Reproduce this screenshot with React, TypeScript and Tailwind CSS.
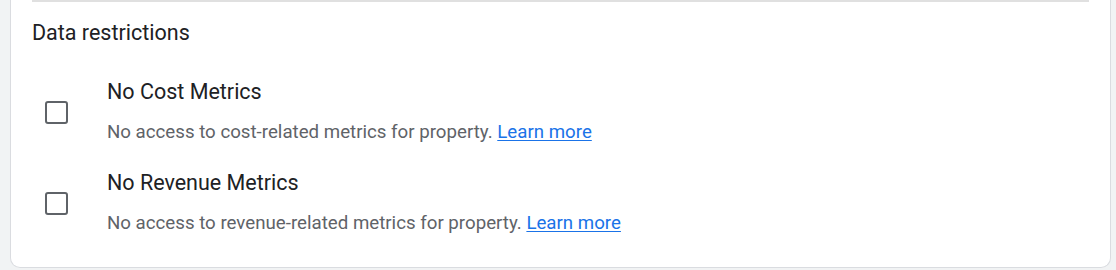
import React, { useState } from 'react';

interface RestrictionProps {
  title: string;
  description: string;
}

const Restriction = ({ title, description }: RestrictionProps) => {
  const [checked, setChecked] = useState(false);

  return (
    <div className="flex items-center">
      <div className="w-[75px] shrink-0 pl-[13px] pt-[1px]">
        <button
          type="button"
          onClick={() => setChecked(!checked)}
          className={`block h-[23px] w-[23px] rounded-[3px] border-[2.5px] ${
            checked ? 'border-[#1a73e8] bg-[#1a73e8]' : 'border-[#5f6368] bg-white'
          }`}
        />
      </div>
      <div className="flex flex-col gap-[12px]">
        <div className="text-[21.5px] leading-[28px] text-[#202124] [font-family:Roboto,'Liberation_Sans',sans-serif]">
          {title}
        </div>
        <div className="text-[18.7px] leading-[28px] text-[#5f6368] [font-family:Roboto,'Liberation_Sans',sans-serif]">
          {description}{' '}
          <a href="#" className="text-[#1a73e8] underline underline-offset-2">
            Learn more
          </a>
        </div>
      </div>
    </div>
  );
};

export default function App() {
  return (
    <div className="h-[270px] w-[1116px] bg-[#f1f3f4] pl-[10px] pr-[5px]">
      <div className="h-[268px] rounded-b-[10px] border-x border-b border-[#dadce0] bg-white px-[21px] pb-[31px]">
        <div className="h-[2px] bg-[#e0e0e0]" />
        <h2 className="mt-[17px] text-[21.5px] leading-[28px] text-[#202124] [font-family:Roboto,'Liberation_Sans',sans-serif]">
          Data restrictions
        </h2>

        <div className="mt-[31px] flex flex-col gap-[23px]">
          <Restriction
            title="No Cost Metrics"
            description="No access to cost-related metrics for property."
          />
          <Restriction
            title="No Revenue Metrics"
            description="No access to revenue-related metrics for property."
          />
        </div>
      </div>
    </div>
  );
}
